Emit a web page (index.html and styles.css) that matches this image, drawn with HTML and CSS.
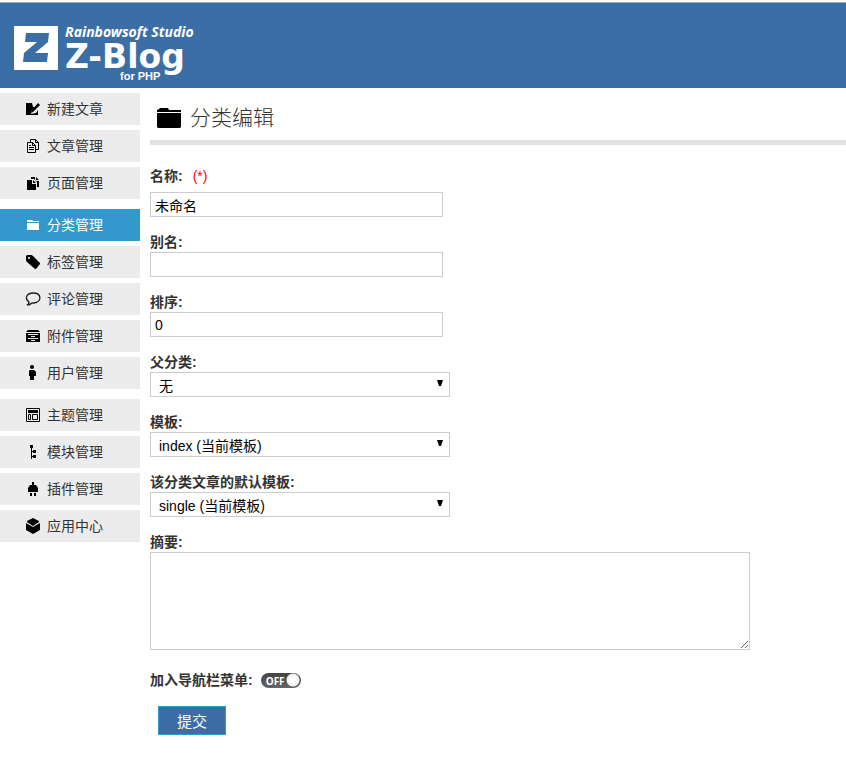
FILE: index.html
```html
<!DOCTYPE html>
<html lang="zh-CN">
<head>
<meta charset="utf-8">
<meta name="viewport" content="width=device-width, initial-scale=1">
<title>分类编辑</title>
<link rel="stylesheet" href="styles.css">
</head>
<body>
<header class="header">
  <a class="brand" href="#">
    <svg class="brand-mark" viewBox="0 0 44 44" aria-hidden="true"><path fill="#fff" d="M0 0h44v44H0z"/><path fill="#3a6ea5" d="M12 7h23l-1 9-13 11h13l-1 9H9l1-9 13-11H11z"/></svg>
    <span class="brand-text">
      <span class="brand-studio">Rainbowsoft Studio</span>
      <span class="brand-name">Z-Blog</span>
      <span class="brand-sub">for PHP</span>
    </span>
  </a>
</header>
<div class="layout">
  <nav class="menu">
    <ul class="menu-group">
      <li><a class="menu-item" href="#"><svg class="icon" viewBox="0 0 14 14"><path d="M0 1h6l1 4 2 0-3 3-1 4 5-1 2-3v5H0z"/><path d="M12 1l2 2-7 7-2 1 1-3z"/></svg>新建文章</a></li>
      <li><a class="menu-item" href="#"><svg class="icon" viewBox="0 0 14 14"><path class="line" d="M4.500 3V.5h5l3 3v7H10M9.500.5v3h3M1.500 3.500h5l3 3v7h-8zM6.500 3.500v3h3M3 6.500h2M3 8.500h5M3 10.500h5"/></svg>文章管理</a></li>
      <li><a class="menu-item" href="#"><svg class="icon" viewBox="0 0 14 14"><path d="M1 4h5v4h4v6H1zM7 4l3 3H7zM5 1h4v4h4v6h-2V6L8 3H5zM10 1l3 3h-3z"/></svg>页面管理</a></li>
    </ul>
    <ul class="menu-group">
      <li><a class="menu-item active" href="#"><svg class="icon" viewBox="0 0 14 14"><path d="M1 2h5l1 1h6v1H1zM1 5h12v7H1z"/></svg>分类管理</a></li>
      <li><a class="menu-item" href="#"><svg class="icon" viewBox="0 0 14 14"><path fill-rule="evenodd" d="M1 0h4q1 0 2 1l7 7v1l-4 5H9L1 7Q0 6 0 5V1zM3 2a1 1 0 1 0 0 2 1 1 0 0 0 0-2z"/></svg>标签管理</a></li>
      <li><a class="menu-item" href="#"><svg class="icon bubble" viewBox="0 0 14 14"><path class="line" d="M1 13C3 12 3 11 3 10-2 6 1 1 7 1c9 0 9 9 1 10H6c-1 1-3 2-5 2z"/></svg>评论管理</a></li>
      <li><a class="menu-item" href="#"><svg class="icon" viewBox="0 0 14 14"><path fill-rule="evenodd" d="M2 1h10l2 2H0zM0 4h14v9H0zM2 5v1h10V5zM2 9v1h10V9zM5 7h4v1H5zM5 11h4v1H5z"/></svg>附件管理</a></li>
      <li><a class="menu-item" href="#"><svg class="icon" viewBox="0 0 14 14"><circle cx="6" cy="1" r="2"/><path d="M4 4h4l2 2v4H8v4H4v-4H3V5z"/></svg>用户管理</a></li>
    </ul>
    <ul class="menu-group">
      <li><a class="menu-item" href="#"><svg class="icon" viewBox="0 0 14 14"><path class="line" d="M.5.5h13v13H.5zM2.500 6.500h2v5h-2zM6.500 6.500h5v5h-5z"/><path d="M2 2h10v3H2z"/></svg>主题管理</a></li>
      <li><a class="menu-item" href="#"><svg class="icon" viewBox="0 0 14 14"><path d="M4 0h3v3H6v3h1V5h3v3H7V7H6v4h1v-1h3v3H7v-1H6v2H5V3H4z"/></svg>模块管理</a></li>
      <li><a class="menu-item" href="#"><svg class="icon" viewBox="0 0 14 14"><path d="M6 0h2v3h2l2 3v4H2V6l2-3h2zM4 11h2v3H4zM8 11h2v3H8z"/></svg>插件管理</a></li>
      <li><a class="menu-item" href="#"><svg class="icon" viewBox="0 0 14 14"><path d="M7-1l6 3v1L7 7 1 3V2zM0 4l7 4 7-4v7l-7 4-7-4z"/></svg>应用中心</a></li>
    </ul>
  </nav>
  <main class="content">
    <h1 class="title"><svg class="title-icon" viewBox="0 0 24 20"><path d="M0 2l2-1 1-1h8l1 2h12v2H0zM0 5h24v14l-1 1H1l-1-1z"/></svg>分类编辑</h1>
    <form class="form">
      <div class="field required">
        <label for="name">名称:<span class="star">(*)</span></label>
        <input class="control" id="name" type="text" value="未命名">
      </div>
      <div class="field">
        <label for="alias">别名:</label>
        <input class="control" id="alias" type="text">
      </div>
      <div class="field">
        <label for="order">排序:</label>
        <input class="control" id="order" type="text" value="0">
      </div>
      <div class="field">
        <label for="parent">父分类:</label>
        <div class="select"><select class="control" id="parent"><option>无</option></select><svg class="arrow" viewBox="0 0 6 7"><path d="M0 0h6L4 6H2z"/></svg></div>
      </div>
      <div class="field">
        <label for="template">模板:</label>
        <div class="select"><select class="control" id="template"><option>index (当前模板)</option></select><svg class="arrow" viewBox="0 0 6 7"><path d="M0 0h6L4 6H2z"/></svg></div>
      </div>
      <div class="field">
        <label for="log-template">该分类文章的默认模板:</label>
        <div class="select"><select class="control" id="log-template"><option>single (当前模板)</option></select><svg class="arrow" viewBox="0 0 6 7"><path d="M0 0h6L4 6H2z"/></svg></div>
      </div>
      <div class="field">
        <label for="intro">摘要:</label>
        <textarea class="control" id="intro" rows="5"></textarea>
      </div>
      <div class="switch-row">
        <label for="navbar">加入导航栏菜单:</label>
        <span class="switch"><input id="navbar" type="checkbox"><span class="switch-text">OFF</span></span>
      </div>
      <button class="submit" type="submit">提交</button>
    </form>
  </main>
</div>
</body>
</html>
```
FILE: styles.css
```css
* { box-sizing: border-box; }

body {
  margin: 0;
  padding-top: 2px;
  background: #fff;
  color: #333;
  font: 14px/20px "Liberation Sans", "Noto Sans CJK SC", sans-serif;
}

.header {
  height: 86px;
  padding: 23px 14px 0;
  border-top: 1px solid #a6a6a6;
  background: #3a6ea5;
}

.brand {
  display: inline-flex;
  gap: 7px;
  color: #fff;
  text-decoration: none;
}

.brand-mark { width: 44px; height: 44px; }

.brand-text { display: flex; flex-direction: column; }

.brand-studio {
  font: italic bold 14px/12px "Noto Sans", sans-serif;
}

.brand-name {
  font: bold 33px/38px "DejaVu Sans", sans-serif;
}

.brand-sub {
  margin-top: -6px;
  padding-left: 55px;
  font-size: 11px;
  font-weight: bold;
  line-height: 12px;
}

.layout { display: flex; gap: 10px; }

.menu { flex: 0 0 140px; padding-top: 5px; }

.menu-group {
  display: flex;
  flex-direction: column;
  gap: 5px;
  margin: 0 0 10px;
  padding: 0;
  list-style: none;
}

.menu-item {
  display: flex;
  align-items: center;
  gap: 7px;
  height: 32px;
  padding-left: 26px;
  background: #ececec;
  color: #333;
  text-decoration: none;
}

.menu-item.active { background: #3399cc; color: #fff; }

.icon { width: 14px; height: 14px; fill: #000; overflow: visible; }

.active .icon { fill: #fff; }

.icon .line { fill: none; stroke: #000; stroke-width: 1; }

.bubble .line { stroke: #222; stroke-width: 1.4; }

.content { flex: 1; min-width: 0; }

.title {
  display: flex;
  align-items: center;
  gap: 9px;
  height: 57px;
  margin: 0;
  padding: 8px 0 0 7px;
  border-bottom: 5px solid #e0e0e0;
  font-size: 21px;
  font-weight: 300;
}

.title-icon { width: 24px; height: 20px; fill: #000; }

.form { padding: 21px 0 32px; }

.field { margin-bottom: 15px; }

.field label,
.switch-row label {
  display: block;
  font-size: 14px;
  font-weight: bold;
}

.required label { margin-bottom: 6px; }

.star { margin-left: 10px; color: #f00; font-weight: normal; }

.control {
  display: block;
  width: 293px;
  max-width: 100%;
  height: 25px;
  margin: 0;
  padding: 0 4px;
  border: 1px solid #ccc;
  border-radius: 0;
  background: #fff;
  color: #000;
  font: 14px "Liberation Sans", "Noto Sans CJK SC", sans-serif;
}

.select { position: relative; width: 300px; max-width: 100%; }

.select .control {
  width: 100%;
  padding: 2px 8px 0;
  appearance: none;
}

.arrow {
  position: absolute;
  top: 8px;
  right: 7px;
  width: 6px;
  height: 7px;
  pointer-events: none;
}

textarea.control { width: 600px; height: 98px; }

.switch-row {
  display: flex;
  align-items: center;
  gap: 8px;
  margin: 20px 0 16px;
}

.switch { position: relative; display: flex; }

.switch input {
  width: 40px;
  height: 15px;
  margin: 0;
  border-radius: 8px;
  background: radial-gradient(circle at 32px 7px, #fff 0 3px, #eee 6px, transparent 7px), linear-gradient(#444, #666);
  appearance: none;
}

.switch-text {
  position: absolute;
  top: 0;
  left: 5px;
  color: #fff;
  font: bold 10px/16px "Open Sans", sans-serif;
  pointer-events: none;
}

.submit {
  display: block;
  height: 29px;
  margin: 0 0 0 8px;
  padding: 0 18px 1px;
  border: 1px solid #3399cc;
  background: #3a6ea5;
  color: #fff;
  font: 15px "Liberation Sans", "Noto Sans CJK SC", sans-serif;
}
```
